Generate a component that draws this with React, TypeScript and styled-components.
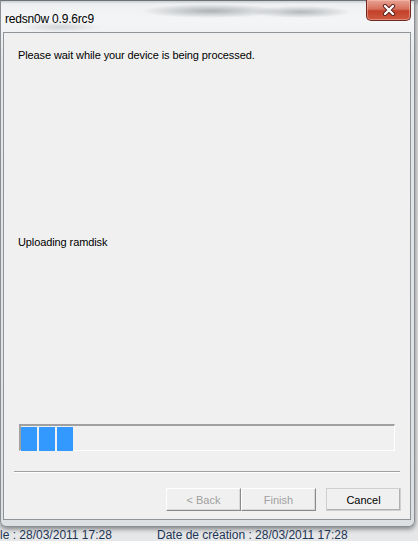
import React from 'react';
import styled, {createGlobalStyle} from 'styled-components';

const GlobalStyle = createGlobalStyle`
  html, body {
    margin: 0;
    padding: 0;
    background: #dcdfe2;
  }
  body {
    font-family: "Liberation Sans", Arial, sans-serif;
    font-size: 11px;
  }
`;

const Screen = styled.div`
  width: 418px;
  height: 541px;
  overflow: hidden;
  display: flex;
  flex-direction: column;
  background: linear-gradient(#9a9da0, #d8dadc 6px, #e6e7e8);
`;

const Window = styled.div`
  width: 415px;
  height: 527px;
  flex-shrink: 0;
  box-sizing: border-box;
  display: flex;
  flex-direction: column;
  border-radius: 0 0 6px 6px;
  border: 1px solid #8a8f95;
  border-top-color: #6d7277;
  box-shadow: 0 2px 5px rgba(0, 0, 0, 0.45);
  background:
    radial-gradient(ellipse 70px 7px at 210px 10px, rgba(120, 125, 130, 0.55), transparent),
    radial-gradient(ellipse 50px 6px at 300px 11px, rgba(120, 125, 130, 0.5), transparent),
    radial-gradient(ellipse 40px 5px at 60px 26px, rgba(150, 155, 160, 0.35), transparent),
    linear-gradient(#c9cdd1, #eef0f2 3px, #f4f5f6 20px, #e3e6e9 60px, #dde0e3);
`;

const TitleBar = styled.div`
  height: 31px;
  display: flex;
  align-items: flex-start;
  justify-content: space-between;
  padding-left: 4px;
  flex-shrink: 0;
`;

const Title = styled.span`
  margin-top: 11px;
  font-size: 12px;
  letter-spacing: -0.2px;
  line-height: 15px;
  color: #000;
`;

const CloseButton = styled.div`
  width: 45px;
  height: 21px;
  margin-right: 3px;
  margin-top: -1px;
  box-sizing: border-box;
  border: 1px solid #6e2a22;
  border-top: none;
  border-radius: 0 0 5px 5px;
  background: linear-gradient(#e8a494, #d6705c 45%, #c2402a 55%, #cf5a40);
  box-shadow: inset 0 0 0 1px rgba(255, 200, 190, 0.45);
  display: flex;
  align-items: center;
  justify-content: center;
`;

const Client = styled.div`
  flex: 1;
  margin: 0 3px 6px 2px;
  border: 1px solid #8f9499;
  background: #f0f0f0;
  display: flex;
  flex-direction: column;
`;

const Message = styled.div<{top: number}>`
  margin-top: ${p => p.top}px;
  padding-left: 14px;
  line-height: 15px;
  font-size: 11px;
  letter-spacing: -0.1px;
  color: #000;
`;

const Progress = styled.div`
  margin: auto 0 0 15px;
  width: 376px;
  height: 27px;
  box-sizing: border-box;
  border: 1px solid #fff;
  border-top-color: #a0a0a0;
  border-left-color: #a0a0a0;
  border-width: 2px 1px 1px 2px;
  padding: 1px 0 0 0;
  display: flex;
  gap: 2px;
`;

const Block = styled.div`
  width: 16px;
  height: 24px;
  background: #3399ff;
`;

const Separator = styled.div`
  margin: 20px 0 0 10px;
  width: 386px;
  border-top: 1px solid #a0a0a0;
  border-bottom: 1px solid #fff;
`;

const Buttons = styled.div`
  display: flex;
  justify-content: flex-end;
  padding: 15px 9px 8px 0;
`;

const Button = styled.button<{disabled?: boolean; gap?: number}>`
  width: 75px;
  height: 23px;
  margin-left: ${p => p.gap || 0}px;
  box-sizing: border-box;
  font-family: "Liberation Sans", Arial, sans-serif;
  font-size: 11px;
  padding: 0;
  color: ${p => (p.disabled ? '#a0a0a0' : '#000')};
  background: #f0f0f0;
  border: 1px solid;
  border-color: #fff #8a8a8a #8a8a8a #fff;
  box-shadow: ${p => (p.disabled ? 'inset -1px -1px 0 #d8d8d8' : 'inset -1px -1px 0 #b0b0b0')};
  outline: ${p => (p.disabled ? 'none' : '1px solid #cfcfcf')};
  outline-offset: -1px;
`;

const Footer = styled.div`
  display: flex;
  padding-top: 2px;
  color: #1c3554;
  font-size: 12px;
  line-height: 12px;
  white-space: nowrap;
`;

const FooterItem = styled.span<{width: number}>`
  width: ${p => p.width}px;
`;

function CloseIcon() {
    return (
        <svg width="14" height="12" viewBox="0 0 14 12">
            <path d="M3 2 L11 10 M11 2 L3 10" stroke="#5a1d18" strokeWidth="4.2" strokeLinecap="round"/>
            <path d="M3 2 L11 10 M11 2 L3 10" stroke="#fff" strokeWidth="2.4" strokeLinecap="round"/>
        </svg>
    );
}

export default function App() {
    return (
        <Screen>
            <GlobalStyle/>
            <Window>
                <TitleBar>
                    <Title>redsn0w 0.9.6rc9</Title>
                    <CloseButton><CloseIcon/></CloseButton>
                </TitleBar>
                <Client>
                    <Message top={15}>Please wait while your device is being processed.</Message>
                    <Message top={172}>Uploading ramdisk</Message>
                    <Progress>
                        {[0, 1, 2].map(i => <Block key={i}/>)}
                    </Progress>
                    <Separator/>
                    <Buttons>
                        <Button disabled>&lt; Back</Button>
                        <Button disabled>Finish</Button>
                        <Button gap={10}>Cancel</Button>
                    </Buttons>
                </Client>
            </Window>
            <Footer>
                <FooterItem width={157}>le : 28/03/2011 17:28</FooterItem>
                <FooterItem width={260}>Date de création : 28/03/2011 17:28</FooterItem>
            </Footer>
        </Screen>
    );
}
